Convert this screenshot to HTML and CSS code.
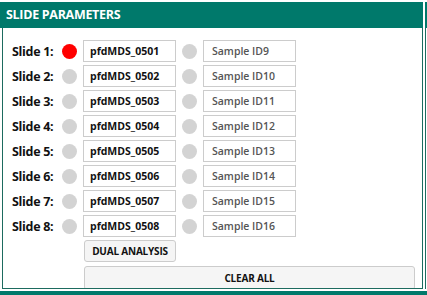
FILE: index.html
```html
<!DOCTYPE html>
<html>
<head>
<meta charset="utf-8">
<link rel="stylesheet" href="styles.css">
</head>
<body>
<div class="page">
  <div class="toprow">
    <div class="panel">
      <div class="panel-header">SLIDE PARAMETERS</div>
      <div class="panel-body">
        <div class="grid">
          <div class="label">Slide 1:</div><span class="dot active"></span><div class="field primary">pfdMDS_0501</div><span class="dot"></span><div class="field secondary">Sample ID9</div>
          <div class="label">Slide 2:</div><span class="dot"></span><div class="field primary">pfdMDS_0502</div><span class="dot"></span><div class="field secondary">Sample ID10</div>
          <div class="label">Slide 3:</div><span class="dot"></span><div class="field primary">pfdMDS_0503</div><span class="dot"></span><div class="field secondary">Sample ID11</div>
          <div class="label">Slide 4:</div><span class="dot"></span><div class="field primary">pfdMDS_0504</div><span class="dot"></span><div class="field secondary">Sample ID12</div>
          <div class="label">Slide 5:</div><span class="dot"></span><div class="field primary">pfdMDS_0505</div><span class="dot"></span><div class="field secondary">Sample ID13</div>
          <div class="label">Slide 6:</div><span class="dot"></span><div class="field primary">pfdMDS_0506</div><span class="dot"></span><div class="field secondary">Sample ID14</div>
          <div class="label">Slide 7:</div><span class="dot"></span><div class="field primary">pfdMDS_0507</div><span class="dot"></span><div class="field secondary">Sample ID15</div>
          <div class="label">Slide 8:</div><span class="dot"></span><div class="field primary">pfdMDS_0508</div><span class="dot"></span><div class="field secondary">Sample ID16</div>
        </div>
        <div class="actions">
          <button class="btn dual">DUAL ANALYSIS</button>
          <button class="btn clear">CLEAR ALL</button>
        </div>
      </div>
    </div>
    <div class="side">
      <div class="side-header"></div>
      <div class="side-body"></div>
    </div>
  </div>
  <div class="bottom-band"></div>
</div>
</body>
</html>
```
FILE: styles.css
```css
html, body {
  margin: 0;
  padding: 0;
  background: #ffffff;
  overflow: hidden;
}
body {
  font-family: "Open Sans", "Noto Sans", sans-serif;
  color: #111;
}
.page {
  width: 427px;
  height: 295px;
  padding-top: 2px;
  box-sizing: border-box;
  display: flex;
  flex-direction: column;
}
.toprow {
  display: flex;
  gap: 2px;
  height: 287px;
}
.panel {
  width: 423px;
  display: flex;
  flex-direction: column;
  flex: none;
}
.panel-header {
  height: 26px;
  background: #00796b;
  color: #fff;
  font-weight: 700;
  font-size: 12.5px;
  line-height: 26px;
  padding-left: 6px;
  letter-spacing: -0.3px;
}
.panel-body {
  margin-left: 2px;
  border-left: 1px solid #1d6b5f;
  border-right: 1px solid #1d6b5f;
  border-bottom: 1px solid #1d6b5f;
  flex: 1;
  overflow: hidden;
  padding: 12px 0 0 9px;
}
.grid {
  display: grid;
  grid-template-columns: 44px 15px 93px 15px 93px;
  column-gap: 6px;
  row-gap: 3px;
  align-items: center;
}
.label {
  font-weight: 700;
  font-size: 12.5px;
  letter-spacing: -0.3px;
  white-space: nowrap;
}
.dot {
  width: 15px;
  height: 15px;
  border-radius: 50%;
  background: #d3d3d3;
}
.dot.active {
  background: #ff0000;
}
.field {
  height: 22px;
  box-sizing: border-box;
  border: 1px solid #cccccc;
  font-size: 10.5px;
  line-height: 20px;
  padding-left: 6px;
  white-space: nowrap;
  overflow: hidden;
}
.field.primary {
  font-weight: 700;
  color: #111;
}
.field.secondary {
  font-weight: 600;
  color: #555;
  padding-left: 8px;
}
.actions {
  display: flex;
  flex-direction: column;
  align-items: flex-start;
  gap: 4px;
  margin-top: 3px;
  padding-left: 72px;
}
.btn {
  font-family: inherit;
  font-weight: 700;
  font-size: 10px;
  color: #111;
  background: #f5f5f5;
  border: 1px solid #cccccc;
  border-radius: 3px;
  padding: 0;
  height: 22px;
  margin: 0;
  letter-spacing: -0.2px;
}
.btn.dual {
  width: 92px;
}
.btn.clear {
  width: 331px;
  height: 24px;
}
.side {
  flex: 1;
  display: flex;
  flex-direction: column;
}
.side-header {
  height: 26px;
  background: #00796b;
}
.side-body {
  flex: 1;
  border-left: 1px solid #1d6b5f;
}
.bottom-band {
  margin-top: 2px;
  flex: 1;
  background: #00796b;
}
```
